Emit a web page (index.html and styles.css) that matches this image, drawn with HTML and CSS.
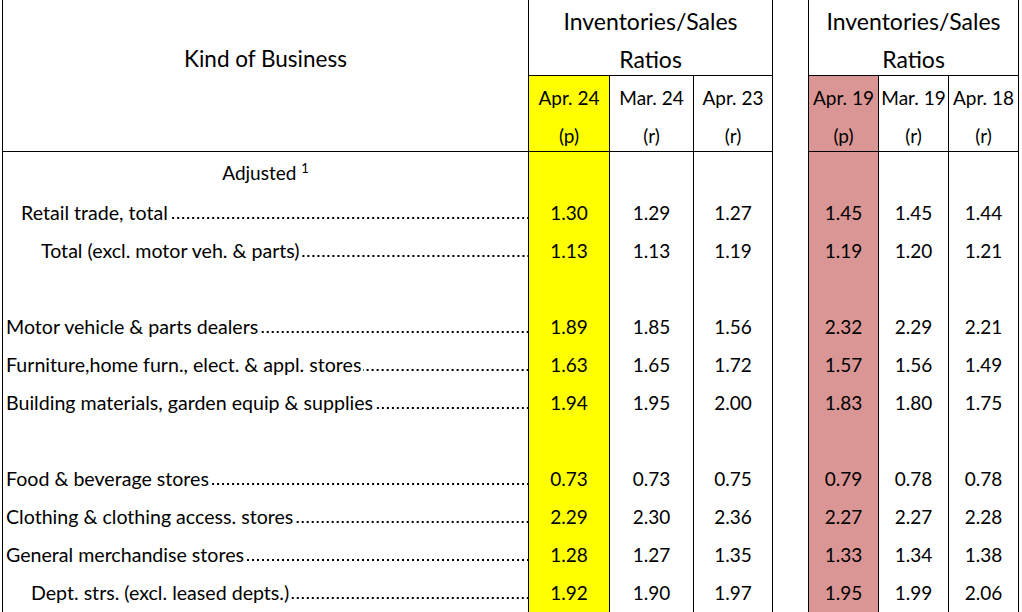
FILE: index.html
```html
<!DOCTYPE html>
<html>
<head>
<meta charset="utf-8">
<link rel="stylesheet" href="styles.css">
</head>
<body>
<div class="sheet">
  <div class="c kob">Kind of Business</div>
  <div class="c grp">Inventories/Sales<br>Ratios</div>
  <div class="gap"></div>
  <div class="c grp last">Inventories/Sales<br>Ratios</div>

  <div class="c date yellow">Apr. 24<br>(p)</div>
  <div class="c date">Mar. 24<br>(r)</div>
  <div class="c date">Apr. 23<br>(r)</div>
  <div class="c date pink">Apr. 19<br>(p)</div>
  <div class="c date">Mar. 19<br>(r)</div>
  <div class="c date last">Apr. 18<br>(r)</div>

  <div class="c adj">Adjusted <sup>1</sup></div>
  <div class="c yellow"></div><div class="c"></div><div class="c"></div>
  <div class="c pink"></div><div class="c"></div><div class="c last"></div>

  <div class="c lab i1"><span class="t">Retail trade, total</span><span class="dots"></span></div>
  <div class="c num yellow">1.30</div><div class="c num">1.29</div><div class="c num">1.27</div>
  <div class="c num pink">1.45</div><div class="c num">1.45</div><div class="c num last">1.44</div>

  <div class="c lab i2"><span class="t">Total (excl. motor veh. &amp; parts)</span><span class="dots"></span></div>
  <div class="c num yellow">1.13</div><div class="c num">1.13</div><div class="c num">1.19</div>
  <div class="c num pink">1.19</div><div class="c num">1.20</div><div class="c num last">1.21</div>

  <div class="c"></div>
  <div class="c yellow"></div><div class="c"></div><div class="c"></div>
  <div class="c pink"></div><div class="c"></div><div class="c last"></div>

  <div class="c lab"><span class="t">Motor vehicle &amp; parts dealers</span><span class="dots"></span></div>
  <div class="c num yellow">1.89</div><div class="c num">1.85</div><div class="c num">1.56</div>
  <div class="c num pink">2.32</div><div class="c num">2.29</div><div class="c num last">2.21</div>

  <div class="c lab"><span class="t">Furniture,home furn., elect. &amp; appl. stores</span><span class="dots"></span></div>
  <div class="c num yellow">1.63</div><div class="c num">1.65</div><div class="c num">1.72</div>
  <div class="c num pink">1.57</div><div class="c num">1.56</div><div class="c num last">1.49</div>

  <div class="c lab"><span class="t">Building materials, garden equip &amp; supplies</span><span class="dots"></span></div>
  <div class="c num yellow">1.94</div><div class="c num">1.95</div><div class="c num">2.00</div>
  <div class="c num pink">1.83</div><div class="c num">1.80</div><div class="c num last">1.75</div>

  <div class="c"></div>
  <div class="c yellow"></div><div class="c"></div><div class="c"></div>
  <div class="c pink"></div><div class="c"></div><div class="c last"></div>

  <div class="c lab"><span class="t">Food &amp; beverage stores</span><span class="dots"></span></div>
  <div class="c num yellow">0.73</div><div class="c num">0.73</div><div class="c num">0.75</div>
  <div class="c num pink">0.79</div><div class="c num">0.78</div><div class="c num last">0.78</div>

  <div class="c lab"><span class="t">Clothing &amp; clothing access. stores</span><span class="dots"></span></div>
  <div class="c num yellow">2.29</div><div class="c num">2.30</div><div class="c num">2.36</div>
  <div class="c num pink">2.27</div><div class="c num">2.27</div><div class="c num last">2.28</div>

  <div class="c lab"><span class="t">General merchandise stores</span><span class="dots"></span></div>
  <div class="c num yellow">1.28</div><div class="c num">1.27</div><div class="c num">1.35</div>
  <div class="c num pink">1.33</div><div class="c num">1.34</div><div class="c num last">1.38</div>

  <div class="c lab i3"><span class="t">Dept. strs. (excl. leased depts.)</span><span class="dots"></span></div>
  <div class="c num yellow">1.92</div><div class="c num">1.90</div><div class="c num">1.97</div>
  <div class="c num pink">1.95</div><div class="c num">1.99</div><div class="c num last">2.06</div>
</div>
</body>
</html>
```

FILE: styles.css
```css
html, body {
  margin: 0;
  padding: 0;
  background: #ffffff;
}

body {
  font-family: Lato, "Noto Sans", sans-serif;
  color: #000000;
  font-size: 19px;
  overflow: hidden;
}

.sheet {
  margin-left: 2px;
  display: grid;
  grid-template-columns: 526px 81px 84px 79px 36px 70px 70px 71px;
  grid-template-rows: 76px 76px 42px repeat(11, 38px);
}

.c {
  box-sizing: border-box;
  border-left: 1px solid #000000;
  min-width: 0;
}

.c.last {
  border-right: 1px solid #000000;
}

.gap {
  grid-column: 5;
  grid-row: 1 / 15;
  border-left: 1px solid #000000;
}

.kob {
  grid-row: span 2;
  border-bottom: 1px solid #000000;
  text-align: center;
  font-size: 22.5px;
  line-height: 38px;
  padding-top: 40px;
}

.grp {
  grid-column: span 3;
  border-bottom: 1px solid #000000;
  text-align: center;
  font-size: 23px;
  line-height: 38px;
  padding-top: 2px;
}

.date {
  border-bottom: 1px solid #000000;
  text-align: center;
  line-height: 38px;
  padding-top: 3px;
}

.yellow {
  background: #ffff00;
}

.pink {
  background: #da9694;
}

.adj {
  text-align: center;
  line-height: 42px;
}

.adj sup {
  font-size: 13px;
  vertical-align: 7px;
  line-height: 0;
}

.num {
  text-align: center;
  line-height: 38px;
}

.lab {
  display: flex;
  align-items: center;
  padding-left: 3px;
  font-size: 19.6px;
  line-height: 38px;
  white-space: nowrap;
}

.lab .t {
  flex: none;
}

.lab .dots {
  flex: 1 1 auto;
  align-self: stretch;
  margin-left: 2px;
  background-image: linear-gradient(90deg, #000000 2px, transparent 2px);
  background-size: 5px 2px;
  background-repeat: repeat-x;
  background-position: right 1px top 23px;
}

.i1 {
  padding-left: 18px;
}

.i2 {
  padding-left: 38px;
}

.i3 {
  padding-left: 28px;
}
```
